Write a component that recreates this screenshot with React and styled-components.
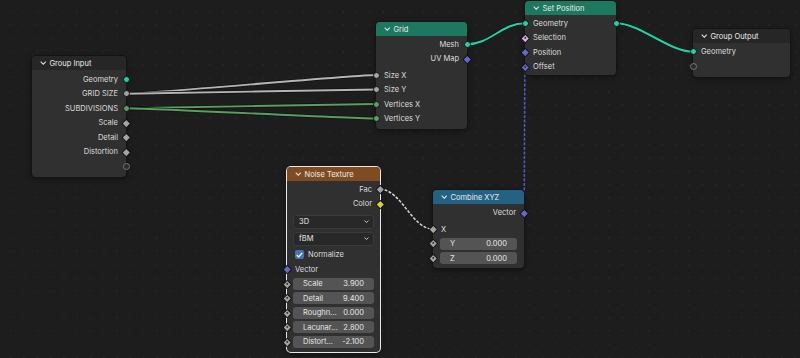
import React from "react";
import styled, { createGlobalStyle } from "styled-components";

const FONT = `Inter, "Noto Sans", "DejaVu Sans", sans-serif`;

const C = {
  geo: "#22d1a2",
  float: "#a3a3a3",
  int: "#5b9e5f",
  vec: "#6565cf",
  color: "#d4d42c",
  bool: "#d6b0e0",
};

const GlobalStyle = createGlobalStyle`
  html, body {
    margin: 0;
    padding: 0;
    background: #1d1d1d;
  }
  * { box-sizing: border-box; }
`;

const Canvas = styled.div`
  position: relative;
  width: 800px;
  height: 358px;
  overflow: hidden;
  background-color: #1d1d1d;
  background-image: radial-gradient(circle, #242424 0.7px, transparent 1.1px);
  background-size: 13.3px 13.3px;
  background-position: 4px 5px;
  font-family: ${FONT};
  font-size: 7.5px;
  color: #dedede;
`;

const Links = styled.svg`
  position: absolute;
  inset: 0;
  pointer-events: none;
`;

const NodeBox = styled.div`
  position: absolute;
  left: ${(p) => p.$x}px;
  top: ${(p) => p.$y}px;
  width: ${(p) => p.$w}px;
  background: #303030;
  border-radius: 4px;
  box-shadow: 0 0 0 1px ${(p) => (p.$selected ? "#e8e8e8" : "#141414")},
    0 2px 6px rgba(0, 0, 0, 0.45);
`;

const Header = styled.div`
  display: flex;
  align-items: center;
  gap: 3px;
  height: 14px;
  padding-left: 8px;
  background: ${(p) => p.$color};
  border-radius: 4px 4px 0 0;
  color: #ececec;
  font-size: 7.5px;
`;

const Body = styled.div`
  padding-top: ${(p) => p.$pt || 1}px;
  padding-bottom: ${(p) => p.$pb || 3}px;
`;

const Row = styled.div`
  position: relative;
  display: flex;
  align-items: center;
  justify-content: ${(p) => (p.$out ? "flex-end" : "flex-start")};
  height: ${(p) => p.$h || 14.5}px;
  padding: 0 ${(p) => p.$pad ?? 8}px;
  white-space: nowrap;
`;

const Spacer = styled.div`
  height: ${(p) => p.$h}px;
`;

const round = (s) => s === "circle" || s === "empty";

const Socket = styled.span`
  position: absolute;
  top: 50%;
  ${(p) => (p.$out ? "right" : "left")}: ${(p) => (round(p.$shape) ? -3.5 : -3.25)}px;
  width: ${(p) => (round(p.$shape) ? 7 : 6.5)}px;
  height: ${(p) => (round(p.$shape) ? 7 : 6.5)}px;
  margin-top: ${(p) => (round(p.$shape) ? -3.5 : -3.25)}px;
  background: ${(p) => (p.$shape === "empty" ? "#2a2a2a" : p.$color)};
  border: ${(p) => (p.$shape === "empty" ? "1px solid #777" : "0.5px solid #111")};
  border-radius: ${(p) => (round(p.$shape) ? "50%" : "1px")};
  transform: ${(p) => (round(p.$shape) ? "none" : "rotate(45deg)")};

  &::after {
    content: "";
    display: ${(p) => (p.$shape === "dot" ? "block" : "none")};
    position: absolute;
    left: 50%;
    top: 50%;
    width: 2px;
    height: 2px;
    margin: -1px 0 0 -1px;
    border-radius: 50%;
    background: #303030;
  }
`;

const Field = styled.div`
  display: flex;
  align-items: center;
  justify-content: space-between;
  width: 100%;
  height: 12px;
  padding: 0 ${(p) => p.$pad || 10}px;
  background: #545454;
  border-radius: 3px;
  color: #e6e6e6;
`;

const Dropdown = styled.div`
  display: flex;
  align-items: center;
  justify-content: space-between;
  width: 100%;
  height: 14px;
  padding: 0 4px 0 5px;
  background: #282828;
  border: 1px solid #3a3a3a;
  border-radius: 3px;
  color: #e6e6e6;
`;

const Check = styled.span`
  display: inline-flex;
  align-items: center;
  justify-content: center;
  width: 9px;
  height: 9px;
  margin-right: 4px;
  background: #4772b3;
  border-radius: 2px;
`;

const Chevron = ({ size = 6.5 }) => (
  <svg width={size} height={size * 0.65} viewBox="0 0 6 4">
    <polyline points="0.6,0.6 3,3.1 5.4,0.6" fill="none" stroke="#e6e6e6" strokeWidth="1" />
  </svg>
);

const Node = ({ x, y, w, title, color, selected, pt, pb, children }) => (
  <NodeBox $x={x} $y={y} $w={w} $selected={selected}>
    <Header $color={color}>
      <Chevron />
      <span>{title}</span>
    </Header>
    <Body $pt={pt} $pb={pb}>
      {children}
    </Body>
  </NodeBox>
);

const Out = ({ label, shape, color }) => (
  <Row $out>
    {label}
    <Socket $out $shape={shape} $color={color} />
  </Row>
);

const In = ({ label, shape, color }) => (
  <Row>
    <Socket $shape={shape} $color={color} />
    {label}
  </Row>
);

const ValueIn = ({ label, value, pad }) => (
  <Row $pad={6}>
    <Socket $shape="dot" $color={C.float} />
    <Field $pad={pad}>
      <span>{label}</span>
      <span>{value}</span>
    </Field>
  </Row>
);

// handles stay short on long links so they read as nearly straight
const curve = (x1, y1, x2, y2) => {
  const h = Math.min(Math.abs(x2 - x1) * 0.4, 24);
  return `M${x1},${y1} C${x1 + h},${y1} ${x2 - h},${y2} ${x2},${y2}`;
};

const links = [
  { a: [126, 93.75], b: [376, 75], c: "#b5b5b5" },
  { a: [126, 93.75], b: [376, 89.5], c: "#b5b5b5" },
  { a: [126, 108.25], b: [376, 104], c: C.int },
  { a: [126, 108.25], b: [376, 118.5], c: C.int },
  { a: [467, 44.25], b: [525, 23.25], c: C.geo },
  { a: [616, 23.25], b: [693, 51.75], c: C.geo },
  { a: [524, 212.75], b: [525, 66.75], c: "#5a5ad0", dash: true },
  { a: [380, 189.25], b: [433, 229], c: "#d8d8d8", dash: true },
];

const App = () => (
  <Canvas>
    <GlobalStyle />
    <Links width="800" height="358">
      {links.map((l, i) => (
        <g key={i}>
          {!l.dash && (
            <path d={curve(...l.a, ...l.b)} fill="none" stroke="#111" strokeWidth="3.4" />
          )}
          <path
            d={curve(...l.a, ...l.b)}
            fill="none"
            stroke={l.c}
            strokeWidth={l.dash ? 1.5 : 2}
            strokeDasharray={l.dash ? "3 1.5" : "none"}
          />
        </g>
      ))}
    </Links>

    <Node x={32} y={56} w={94} title="Group Input" color="#262626" pt={2} pb={3}>
      <Out label="Geometry" shape="circle" color={C.geo} />
      <Out label="GRID SIZE" shape="circle" color={C.float} />
      <Out label="SUBDIVISIONS" shape="circle" color={C.int} />
      <Out label="Scale" shape="diamond" color={C.float} />
      <Out label="Detail" shape="diamond" color={C.float} />
      <Out label="Distortion" shape="diamond" color={C.float} />
      <Out label="" shape="empty" />
    </Node>

    <Node x={376} y={22} w={91} title="Grid" color="#1d7860" pt={1} pb={3}>
      <Out label="Mesh" shape="circle" color={C.geo} />
      <Out label="UV Map" shape="diamond" color={C.vec} />
      <Spacer $h={1.75} />
      <In label="Size X" shape="circle" color={C.float} />
      <In label="Size Y" shape="circle" color={C.float} />
      <In label="Vertices X" shape="circle" color={C.int} />
      <In label="Vertices Y" shape="circle" color={C.int} />
    </Node>

    <Node x={525} y={1} w={91} title="Set Position" color="#1d7860" pt={1} pb={1}>
      <Row>
        <Socket $shape="circle" $color={C.geo} />
        Geometry
        <Socket $out $shape="circle" $color={C.geo} />
      </Row>
      <In label="Selection" shape="dot" color={C.bool} />
      <In label="Position" shape="diamond" color={C.vec} />
      <In label="Offset" shape="dot" color={C.vec} />
    </Node>

    <Node x={693} y={29} w={97} title="Group Output" color="#262626" pt={1.5} pb={3}>
      <In label="Geometry" shape="circle" color={C.geo} />
      <In label="" shape="empty" />
    </Node>

    <Node x={287} y={167} w={93} title="Noise Texture" color="#7f4c22" selected pt={1} pb={3}>
      <Out label="Fac" shape="diamond" color={C.float} />
      <Out label="Color" shape="diamond" color={C.color} />
      <Spacer $h={2} />
      <Row $h={17} $pad={6}>
        <Dropdown>
          <span>3D</span>
          <Chevron size={5} />
        </Dropdown>
      </Row>
      <Row $h={17} $pad={6}>
        <Dropdown>
          <span>fBM</span>
          <Chevron size={5} />
        </Dropdown>
      </Row>
      <Row $h={15} $pad={8}>
        <Check>
          <svg width="7" height="6" viewBox="0 0 7 6">
            <polyline points="0.8,3 2.7,4.9 6.2,0.9" fill="none" stroke="#fff" strokeWidth="1.2" />
          </svg>
        </Check>
        Normalize
      </Row>
      <In label="Vector" shape="diamond" color={C.vec} />
      <ValueIn label="Scale" value="3.900" />
      <ValueIn label="Detail" value="9.400" />
      <ValueIn label="Roughn..." value="0.000" />
      <ValueIn label="Lacunar..." value="2.800" />
      <ValueIn label="Distort..." value="-2.100" />
    </Node>

    <Node x={433} y={190} w={91} title="Combine XYZ" color="#246283" pt={1.5} pb={3}>
      <Out label="Vector" shape="diamond" color={C.vec} />
      <Spacer $h={1.75} />
      <In label="X" shape="diamond" color={C.float} />
      <Row $pad={7}>
        <Socket $shape="dot" $color={C.float} />
        <Field $pad={10}>
          <span>Y</span>
          <span>0.000</span>
        </Field>
      </Row>
      <Row $pad={7}>
        <Socket $shape="dot" $color={C.float} />
        <Field $pad={10}>
          <span>Z</span>
          <span>0.000</span>
        </Field>
      </Row>
    </Node>
  </Canvas>
);

export default App;
